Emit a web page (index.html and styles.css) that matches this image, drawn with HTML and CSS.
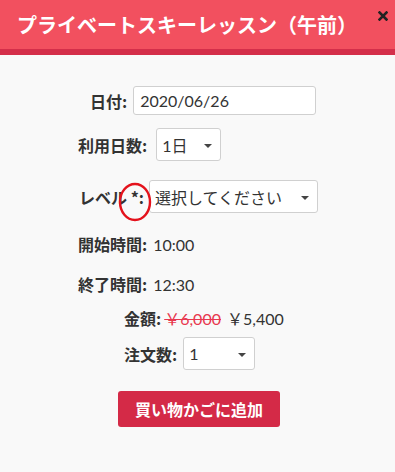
FILE: index.html
```html
<!DOCTYPE html>
<html lang="ja">

<head>
    <meta charset="UTF-8">
    <meta name="viewport" content="width=device-width, initial-scale=1.0">
    <title>プライベートスキーレッスン（午前）</title>
    <link rel="stylesheet" href="styles.css">
</head>

<body>
    <div class="modal">
        <div class="modal-header">
            <h1 class="modal-title">プライベートスキーレッスン（午前）</h1>
            <button class="close" type="button" aria-label="close">
                <svg width="10" height="10" viewBox="0 0 10 10">
                    <path d="M1.5 1.5 L8.5 8.5 M8.5 1.5 L1.5 8.5" stroke="#222" stroke-width="2.6" stroke-linecap="square" />
                </svg>
            </button>
        </div>

        <form class="modal-body">
            <div class="row row-date">
                <label>日付:</label>
                <input class="field date" type="text" value="2020/06/26">
            </div>

            <div class="row row-days">
                <label>利用日数:</label>
                <span class="select days"><span class="value">1日</span></span>
            </div>

            <div class="row row-level">
                <label>レベル *:</label>
                <span class="select level"><span class="value">選択してください</span></span>
                <!-- annotation mark round the required star -->
                <svg class="mark" width="36" height="42" viewBox="0 0 36 42">
                    <ellipse cx="18" cy="21" rx="15" ry="18" fill="none" stroke="#e4121c" stroke-width="2.4" />
                </svg>
            </div>

            <div class="row row-start">
                <label>開始時間:</label>
                <span class="text">10:00</span>
            </div>

            <div class="row row-end">
                <label>終了時間:</label>
                <span class="text">12:30</span>
            </div>

            <div class="row row-price">
                <label>金額:</label>
                <span class="text old-price">￥6,000</span>
                <span class="text">￥5,400</span>
            </div>

            <div class="row row-qty">
                <label>注文数:</label>
                <span class="select qty"><span class="value">1</span></span>
            </div>

            <div class="actions">
                <button class="btn-cart" type="button">買い物かごに追加</button>
            </div>
        </form>
    </div>
</body>

</html>
```

FILE: styles.css
```css
body,
html {
    margin: 0;
    padding: 0;
    background: #f9f9f9;
    font-family: Lato, "Noto Sans CJK JP", sans-serif;
    color: #333;
}

.modal-header {
    position: relative;
    height: 49px;
    background: #f2505f;
    border-bottom: 6px solid #d42f4a;
    display: flex;
    align-items: center;
    padding-left: 17px;
}

.modal-title {
    margin: 0;
    font-family: "Noto Sans CJK JP", sans-serif;
    font-size: 20px;
    font-weight: bold;
    color: #fff;
}

.close {
    position: absolute;
    top: 11px;
    right: 7px;
    padding: 0;
    border: 0;
    background: none;
    width: 10px;
    height: 10px;
    line-height: 0;
}

.modal-body {
    display: flex;
    flex-direction: column;
    padding-top: 31px;
}

.row {
    position: relative;
    display: flex;
    align-items: center;
}

.row label {
    font-family: "Noto Sans CJK JP", sans-serif;
    font-size: 16px;
    font-weight: bold;
    margin-right: 6px;
}

.text {
    font-size: 16px;
}

.row-date { padding-left: 90px; height: 29px; }
.row-days { padding-left: 78px; height: 33px; margin-top: 13px; }
.row-level { padding-left: 79px; height: 33px; margin-top: 19px; }
.row-start { padding-left: 78px; height: 24px; margin-top: 19px; }
.row-end { padding-left: 78px; height: 24px; margin-top: 16px; }
.row-price { padding-left: 124px; height: 24px; margin-top: 10px; }
.row-qty { padding-left: 124px; height: 33px; margin-top: 7px; }

.row-days label { margin-right: 9px; }
.row-level label { margin-right: 5px; }

.field,
.select {
    box-sizing: border-box;
    background: #fff;
    border: 1px solid #d0d0d0;
    border-radius: 3px;
    font-family: Lato, "Noto Sans CJK JP", sans-serif;
    font-size: 16px;
    color: #333;
}

.field {
    width: 183px;
    height: 29px;
    padding: 0 6px;
}

.select {
    position: relative;
    display: flex;
    align-items: center;
    height: 33px;
    padding-left: 5px;
}

.select::after {
    content: "";
    position: absolute;
    right: 8px;
    top: 15px;
    border-left: 4px solid transparent;
    border-right: 4px solid transparent;
    border-top: 4px solid #444;
}

.days { width: 65px; }
.level { width: 169px; }
.qty { width: 72px; }

.mark {
    position: absolute;
    left: 117px;
    top: 1px;
}

.old-price {
    color: #e8384f;
    text-decoration: line-through;
    margin-right: 6px;
    margin-left: -3px;
}

.actions {
    display: flex;
    padding-left: 118px;
    margin-top: 21px;
}

.btn-cart {
    width: 162px;
    height: 36px;
    border: 0;
    border-radius: 3px;
    background: #d42a47;
    color: #fff;
    font-family: "Noto Sans CJK JP", sans-serif;
    font-size: 16px;
    font-weight: bold;
}
```
